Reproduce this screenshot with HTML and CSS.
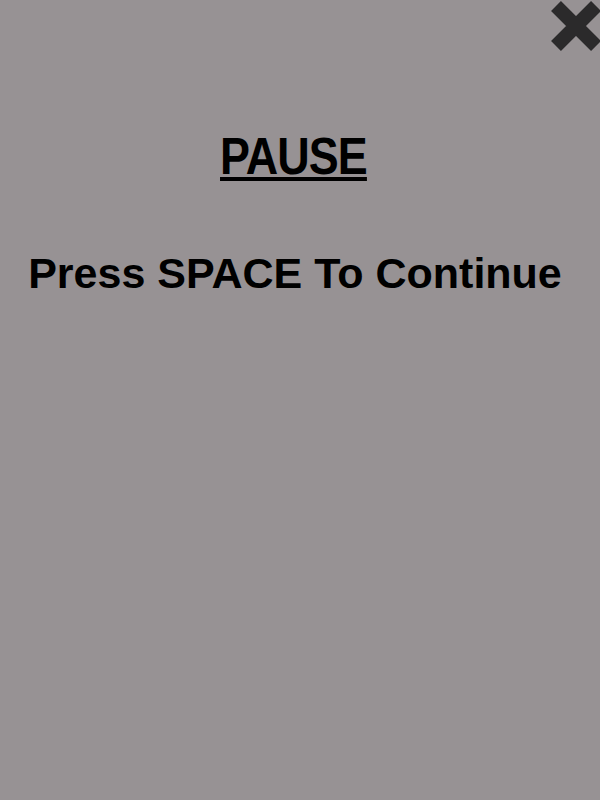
FILE: index.html
```html
<!DOCTYPE html>
<html>
<head>
<meta charset="utf-8">
<link rel="stylesheet" href="styles.css">
</head>
<body>
<div class="screen">
  <button class="close" aria-label="Close">
    <svg width="52" height="52" viewBox="0 0 52 52"><path d="M6 6 L46 46 M46 6 L6 46" stroke="#2b2a2b" stroke-width="14" stroke-linecap="butt" fill="none"/></svg>
  </button>
  <h1 class="title">PAUSE</h1>
  <p class="hint">Press SPACE To Continue</p>
</div>
</body>
</html>
```
FILE: styles.css
```css
html, body {
  margin: 0;
  padding: 0;
  background: #979294;
}
.screen {
  position: relative;
  width: 600px;
  height: 800px;
  overflow: hidden;
  display: flex;
  flex-direction: column;
  align-items: center;
  font-family: "Liberation Sans", Arial, sans-serif;
  font-weight: bold;
  color: #000;
}
.close {
  position: absolute;
  top: 0;
  left: 550px;
  border: 0;
  padding: 0;
  background: none;
  line-height: 0;
}
.title {
  margin: 127px 0 0 -13px;
  font-size: 51px;
  line-height: 60px;
  letter-spacing: -1px;
  transform: scaleX(0.88);
  text-decoration: underline;
  text-decoration-thickness: 4px;
  text-underline-offset: 3px;
}
.hint {
  margin: 61px 0 0 -10px;
  font-size: 43px;
  line-height: 50px;
}
```
